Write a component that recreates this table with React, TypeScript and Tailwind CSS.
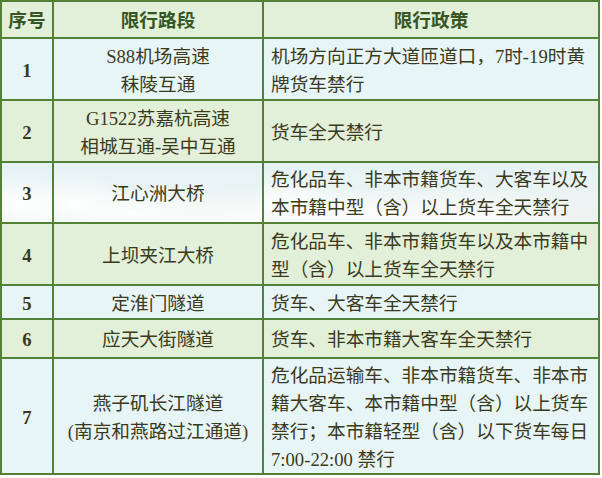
import React from "react";

const FONT = {
  fontFamily: '"Liberation Serif", "Noto Sans CJK SC", serif',
};

type Row = {
  n: string;
  road: string[];
  policy: string;
  bg: string;
};

const rows: Row[] = [
  { n: "1", road: ["S88机场高速", "秣陵互通"], policy: "机场方向正方大道匝道口，7时-19时黄牌货车禁行", bg: "bg-[#e8f5f7]" },
  { n: "2", road: ["G1522苏嘉杭高速", "相城互通-吴中互通"], policy: "货车全天禁行", bg: "bg-[#e2efd9]" },
  { n: "3", road: ["江心洲大桥"], policy: "危化品车、非本市籍货车、大客车以及本市籍中型（含）以上货车全天禁行", bg: "cloud" },
  { n: "4", road: ["上坝夹江大桥"], policy: "危化品车、非本市籍货车以及本市籍中型（含）以上货车全天禁行", bg: "bg-[#e2efd9]" },
  { n: "5", road: ["定淮门隧道"], policy: "货车、大客车全天禁行", bg: "bg-[#e8f5f7]" },
  { n: "6", road: ["应天大街隧道"], policy: "货车、非本市籍大客车全天禁行", bg: "bg-[#e2efd9]" },
  { n: "7", road: ["燕子矶长江隧道", "(南京和燕路过江通道)"], policy: "危化品运输车、非本市籍货车、非本市籍大客车、本市籍中型（含）以上货车禁行；本市籍轻型（含）以下货车每日7:00-22:00 禁行", bg: "bg-[#e8f5f7]" },
];

const cloudBg =
  "bg-[radial-gradient(ellipse_60px_30px_at_20px_40px,rgba(255,255,255,0.95),rgba(255,255,255,0)),radial-gradient(ellipse_90px_25px_at_80px_50px,rgba(255,255,255,0.9),rgba(255,255,255,0)),radial-gradient(ellipse_120px_30px_at_200px_55px,rgba(255,255,255,0.85),rgba(255,255,255,0)),linear-gradient(180deg,#e4f2f4_0%,#ecf4f4_55%,#eef2ef_100%)]";

export default function App() {
  return (
    <div className="w-[602px] h-[478px] bg-white" style={FONT}>
      <div className="w-[600px] grid grid-cols-[50px_208px_334px] grid-rows-[35px_60px_60px_59px_60px_32px_37px_114px] gap-[2px] p-[2px] bg-[#538135] text-[18.67px] leading-[28px] text-[#3a3a1c]">
        <div className="bg-[#e2efd9] flex items-center justify-center font-bold text-[#375623] pt-[2px]">序号</div>
        <div className="bg-[#e2efd9] flex items-center justify-center font-bold text-[#375623] pt-[2px]">限行路段</div>
        <div className="bg-[#e2efd9] flex items-center justify-center font-bold text-[#375623] pt-[2px]">限行政策</div>
        {rows.map((r) => {
          const bg = r.bg === "cloud" ? cloudBg : r.bg;
          return (
            <React.Fragment key={r.n}>
              <div className={`${bg} flex items-center justify-center font-bold pt-[3px]`}>{r.n}</div>
              <div className={`${bg} flex flex-col items-center justify-center text-center pt-[3px]`}>
                {r.road.map((t) => (
                  <div key={t}>{t}</div>
                ))}
              </div>
              <div className={`${bg} flex items-center pl-[7px] pr-[6px] pt-[3px]`}>
                <div>{r.policy}</div>
              </div>
            </React.Fragment>
          );
        })}
      </div>
    </div>
  );
}
